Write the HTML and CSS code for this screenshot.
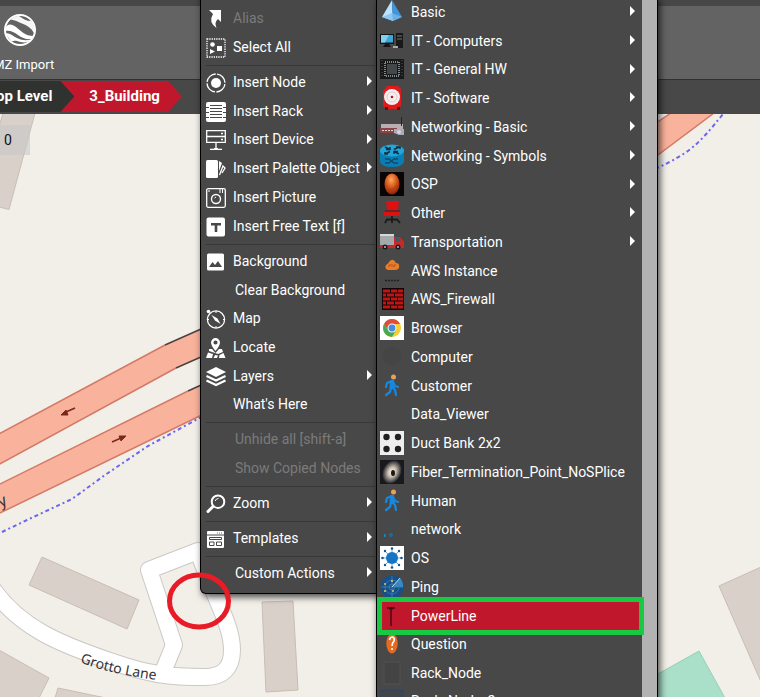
FILE: index.html
```html
<!DOCTYPE html>
<html lang="en">
<head>
<meta charset="utf-8">
<title>3_Building</title>
<link rel="stylesheet" href="styles.css">
</head>
<body>
<header class="toolbar">
  <button class="tool">
    <svg class="tool-icon" viewBox="0 0 32 32"><circle cx="16" cy="16" r="15" fill="none" stroke="#fff" stroke-width="2"/><path fill="#fff" d="M6 6C10 5 13 8 18 9.500C23 11 27 14 30 19C31 15 30 10 27 7C23 7 19 5 15 2C11 2 8 4 6 6z" opacity=".95"/><path fill="#fff" d="M1 14C4 9 8 10 12 13C17 17 21 22 30 22L28 25C23 26 18 24 14 21C10 18 6 16 1 17z"/><path fill="#fff" d="M1 19C6 19 9 22 13 24C18 27 23 26 27 26C22 30 17 28 13 27C10 26 9 28 7 27z"/></svg>
    <span>KMZ Import</span>
  </button>
</header>
<nav class="crumbs" aria-label="Location">
  <a class="crumb crumb-root" href="#">Top Level</a>
  <a class="crumb crumb-current" href="#">3_Building</a>
</nav>
<main class="map">
  <svg class="map-canvas" viewBox="0 114 760 583" preserveAspectRatio="xMinYMin slice">
    <g fill="#d9d0c9" stroke="#c9bdb6">
      <path d="M3 113H35L9 209.500L-1 207V127z"/>
      <path d="M42 557L139 600L127 629L29 585z"/>
      <path d="M-1 650L49 678L39 698H-1z"/>
      <path d="M58 688L106 698H55z"/>
      <path d="M262 602L293 601L298 690L266 692z"/>
      <path d="M761 567L719 586L761 682z"/>
    </g>
    <path fill="#aadfc9" stroke="#96d0b8" d="M640 684L699 651L725 698H640z"/>
    <g fill="none" stroke-linejoin="round">
      <path stroke="#cbc9c6" stroke-width="18" d="M-8 588C20 628 60 644 110 661C150 675 170 677 205 677Q232 677 232 650C232 625 215 600 198 551L149 570L174 645L163 672"/>
      <path stroke="#fff" stroke-width="16" d="M-8 588C20 628 60 644 110 661C150 675 170 677 205 677Q232 677 232 650C232 625 215 600 198 551L149 570L174 645L163 672"/>
    </g>
    <g fill="#f9b29c">
      <path d="M-1 434L165 345L210 325V353L176 368L-1 464.500z"/>
      <path d="M-1 484.500L188 391L210 381V411L-1 513.500z"/>
      <path d="M650 127L671 113H714L650 161z"/>
    </g>
    <g fill="none" stroke="#d27a67" stroke-width="1.500">
      <path d="M-1 434L165 345M-1 464.500L176 368M-1 484.500L188 391M-1 513.500L210 411M650 127L671 113M650 161L714 113"/>
      <path stroke="#4b423e" d="M165 345L210 325M176 368L210 353M188 391L210 381"/>
    </g>
    <g fill="#7a2a1c" stroke="#7a2a1c">
      <path d="M75 408L66 412" stroke-width="1.500"/><path d="M61 415L66 410L68 415z"/>
      <path d="M112 442L121 438" stroke-width="1.500"/><path d="M126 436L119 436L121 441z"/>
    </g>
    <g fill="none" stroke="#6a66f0" stroke-width="2" stroke-dasharray="4 3 2 3">
      <path d="M2 532L27 520L72 499L105 475L148 446L205 415"/>
      <path d="M655 169C690 153 698 145 723 114"/>
    </g>
    <path id="lane" fill="none" d="M80 662Q112 676 190 684"/>
    <text class="road-name"><textPath href="#lane">Grotto Lane</textPath></text>
    <text class="road-name road-name-large" text-anchor="end" transform="translate(8 504) rotate(-26)">Way</text>
  </svg>
  <div class="counter">0</div>
</main>

<div class="menu" role="menu">
  <div class="group">
    <button class="item" disabled><svg class="icon" viewBox="0 0 20 20"><path fill="#aaa" d="M6 4H18V10H6z"/></svg>Paste</button>
    <button class="item" disabled><svg class="icon" viewBox="0 0 20 20"><path fill="#fff" d="M3 1H15V13L12 10Q8 13 10.500 19Q2 13 7 5z"/></svg>Alias</button>
    <button class="item"><svg class="icon" viewBox="0 0 20 20"><path fill="none" stroke="#fff" stroke-width="1.300" stroke-dasharray="1.300 1" d="M1 1H19V19H1z"/><circle cx="6.500" cy="6.500" r="2.300" fill="#fff"/><path fill="#fff" d="M11 8H16V13H11zM4 11L9 13.500L4 16z"/></svg>Select All</button>
  </div>
  <div class="group">
    <button class="item has-sub"><svg class="icon" viewBox="0 0 20 20"><circle cx="10" cy="10" r="9" fill="none" stroke="#fff" stroke-width="1.300" stroke-dasharray="12.600 1.500" stroke-dashoffset="-1"/><circle cx="10" cy="10" r="5" fill="#fff"/></svg>Insert Node</button>
    <button class="item has-sub"><svg class="icon" viewBox="0 0 20 20"><rect width="20" height="20" rx="2" fill="#fff"/><path fill="none" stroke="#484848" d="M0 5.500H3M17 5.500H20M0 10.500H3M17 10.500H20M0 15.500H3M17 15.500H20M4 3.500H16M4 6.500H16M4 9.500H16M4 12.500H16M4 15.500H16"/></svg>Insert Rack</button>
    <button class="item has-sub"><svg class="icon" viewBox="0 0 20 20"><path fill="none" stroke="#fff" stroke-width="1.300" d="M.7.700H19.300V12.300H.7zM.7 6.500H19.300M10 12V18M4 19.300H16M15 3.500H17M15 9.500H17M10 18L8 19M10 18L12 19"/></svg>Insert Device</button>
    <button class="item has-sub"><svg class="icon" viewBox="0 0 20 20"><rect y="1" width="12" height="18" rx="1.500" fill="#fff"/><path fill="#fff" d="M13 2L16 4L13 12z"/><path fill="none" stroke="#fff" stroke-width="1.300" d="M13.500 16L17 7L19 9L16 14"/></svg>Insert Palette Object</button>
    <button class="item"><svg class="icon" viewBox="0 0 20 20"><rect x=".7" y=".7" width="18.600" height="18.600" rx="1.500" fill="none" stroke="#fff" stroke-width="1.300"/><circle cx="10" cy="11" r="4.500" fill="none" stroke="#fff" stroke-width="1.400"/><path stroke="#fff" d="M14 1V5M16.500 1V5M2 3H4M8.500 10L10 9"/></svg>Insert Picture</button>
    <button class="item"><svg class="icon" viewBox="0 0 20 20"><rect x=".5" y=".5" width="18.500" height="19" rx="2" fill="#fff"/><path fill="#484848" d="M5 6H15V8.500H11.300V15H8.700V8.500H5z"/></svg>Insert Free Text [f]</button>
  </div>
  <div class="group group-map">
    <button class="item"><svg class="icon" viewBox="0 0 20 20"><rect x="1" y="1.500" width="17" height="17" rx="1.500" fill="#fff"/><path fill="#484848" d="M3 15L6.500 10L9 13L12 9L16 15z"/></svg>Background</button>
    <button class="item text-only">Clear Background</button>
    <button class="item"><svg class="icon" viewBox="0 0 20 20"><circle cx="10" cy="10.500" r="8.600" fill="none" stroke="#fff" stroke-width="1.300"/><path fill="#fff" d="M5.500 6L11.500 9.500L14.500 15L9 11.500z"/><path stroke="#fff" d="M10 2V4M10 17V19M1 10.500H3M17 10.500H19"/><circle cx="2.500" cy="2.500" r="1.800" fill="#fff"/></svg>Map</button>
    <button class="item"><svg class="icon" viewBox="0 0 20 20"><path fill="#fff" fill-rule="evenodd" d="M9.500 0A4.600 4.600 0 0 1 14 4.600C14 8 9.500 13 9.500 13S5 8 5 4.600A4.600 4.600 0 0 1 9.500 0zM9.500 2.500A2 2 0 1 0 9.500 6.600A2 2 0 1 0 9.500 2.500z"/><path fill="#fff" d="M3 11H6L9.500 15L13 11H16L17 14L12 16L3 13zM2 14.500L7 16L6 20H0zM9 17L12 17.500L11 20H7.500zM13.500 17L17.500 15L19.500 20H13z"/></svg>Locate</button>
    <button class="item has-sub"><svg class="icon" viewBox="0 0 20 20"><path fill="#fff" d="M10 0L20 5L10 10L0 5z"/><path fill="none" stroke="#fff" stroke-width="2.200" d="M.5 9L10 13.500L19.500 9M.5 13.500L10 18L19.500 13.500"/></svg>Layers</button>
    <button class="item"><span class="icon"></span>What's Here</button>
  </div>
  <div class="group">
    <button class="item text-only" disabled>Unhide all [shift-a]</button>
    <button class="item text-only" disabled>Show Copied Nodes</button>
  </div>
  <div class="group">
    <button class="item has-sub"><svg class="icon" viewBox="0 0 20 20"><circle cx="12" cy="7.700" r="6.300" fill="none" stroke="#fff" stroke-width="2"/><path stroke="#fff" stroke-width="3" stroke-linecap="round" d="M6.500 13L2 17.500"/><path fill="none" stroke="#fff" d="M9 7Q10 4.500 12.500 4.500"/></svg>Zoom</button>
  </div>
  <div class="group">
    <button class="item has-sub"><svg class="icon" viewBox="0 0 20 20"><rect x="1" y="2" width="17" height="17" rx="1" fill="#fff"/><path fill="none" stroke="#484848" d="M1 6H18M3.500 8.500H15.500V10.500H3.500zM3.500 13H8V16.500H3.500zM10.500 13H15.500V16.500H10.500z"/><path stroke="#777" d="M11 4H12M13 4H14M15 4H16"/></svg>Templates</button>
  </div>
  <div class="group">
    <button class="item text-only has-sub">Custom Actions</button>
  </div>
</div>

<div class="menu submenu" role="menu">
  <div class="entries">
    <button class="item has-sub"><svg class="icon" viewBox="0 0 24 24"><path fill="#b8e2ff" d="M12 0L2 17L13 21z"/><path fill="#3f96dd" d="M12 0L22 17L13 21z"/><path fill="#7dbcf0" d="M2 17L12 13L22 17L13 21z" opacity=".7"/></svg>Basic</button>
    <button class="item has-sub"><svg class="icon" viewBox="0 0 24 24"><path fill="#151515" d="M0 5H14V15H0zM5 15H9L11 18H3z"/><path fill="#39a7d8" d="M1 6H13V13.500H1z"/><path fill="#83d0ee" d="M1 6H9L5 13.500H1z"/><path fill="#191919" d="M16 4H23V19H16z"/><path stroke="#777" d="M17 7H22M17 10H22"/><path fill="#aaa" d="M13 17H18V19H13z"/></svg>IT - Computers</button>
    <button class="item has-sub"><svg class="icon" viewBox="0 0 24 24"><rect y="2" width="24" height="20" fill="#17191b"/><rect x="7" y="7" width="10" height="10" fill="#42474a"/><path fill="none" stroke="#81888c" stroke-width="2" stroke-dasharray="1 1" d="M5 5H19V19H5z"/><path stroke="#555" stroke-dasharray="1 2" d="M2 3V21M22 3V21"/></svg>IT - General HW</button>
    <button class="item has-sub"><svg class="icon" viewBox="0 0 24 24"><path fill="#e0191a" d="M7 0H18L21 3V20L18 23H6L3 20V5z"/><circle cx="12" cy="11" r="8" fill="#f5eeee"/><circle cx="12" cy="11" r="5" fill="none" stroke="#dcc"/><circle cx="12" cy="11" r="1.300" fill="#b41b1b"/><path fill="#7e0507" d="M5 21H8V24H5zM17 21H20V24H17z"/></svg>IT - Software</button>
    <button class="item has-sub"><svg class="icon" viewBox="0 0 24 24"><path fill="#b9afb2" d="M1 9H23V14H1z"/><path fill="#8c4249" d="M0 13H17V18H0z"/><path stroke="#ddc" stroke-dasharray="2 1" d="M2 15.500H13"/><path stroke="#252525" d="M21.500 2V11"/><path fill="#a7adb5" d="M14 14H24V20H19L14 18z"/><circle cx="19" cy="17" r="2" fill="#dce"/></svg>Networking - Basic</button>
    <button class="item has-sub"><svg class="icon" viewBox="0 0 24 24"><path fill="#087eb4" d="M0 6H24V18Q22 23 12 23T0 18z"/><ellipse cx="12" cy="6.500" rx="12" ry="6" fill="#21a5dc"/><path fill="none" stroke="#13303d" stroke-width="1.500" d="M5 3L10 5.500M10 3V5.500H6M19 3L14 5.500M20 5V3H16M5 10L10 7.500M5 8V10H8M19 10L14 7.500M14 10V7.500H18"/><path fill="none" stroke="#124c69" stroke-width="1.300" d="M5 15H9L14 19H18M5 19H9L14 15H18"/></svg>Networking - Symbols</button>
    <button class="item has-sub"><svg class="icon" viewBox="0 0 24 24"><defs><radialGradient id="ember" cx=".45" cy=".3" r=".7"><stop offset="0" stop-color="#f9ab5c"/><stop offset=".5" stop-color="#d9581b"/><stop offset="1" stop-color="#8a210b"/></radialGradient></defs><path fill="#080504" d="M0 0H24V24H0z"/><ellipse cx="12" cy="12" rx="7.500" ry="10.500" fill="url(#ember)"/><path fill="none" stroke="#a33a12" stroke-width=".7" d="M8 17Q13 19 17 13"/></svg>OSP</button>
    <button class="item has-sub"><svg class="icon" viewBox="0 0 24 24"><path fill="#df1010" d="M6 0H19L18 9H7zM4 11H20V15H4z"/><path stroke="#7b0808" d="M5 10H20"/><path fill="none" stroke="#1b1b1b" stroke-width="1.800" d="M12 15V22M5 22L7 18.500H17L20 22"/></svg>Other</button>
    <button class="item has-sub"><svg class="icon" viewBox="0 0 24 24"><path fill="#a4a9ac" d="M0 4H14V15H0z"/><path fill="#d6d9da" d="M0 4H14V6H0z"/><path fill="#cc272b" d="M14 7H20L24 12V18H0V15H14z"/><path fill="#3e5867" d="M16 8H19L21 12H16z"/><circle cx="5" cy="17" r="2.500" fill="#191919"/><circle cx="18" cy="17" r="2.500" fill="#191919"/><circle cx="5" cy="17" r="1" fill="#bbb"/><circle cx="18" cy="17" r="1" fill="#bbb"/></svg>Transportation</button>
    <button class="item"><svg class="icon" viewBox="0 0 24 24"><path fill="#e97b2a" d="M8 11Q4 10 6 6Q8 5 9 3Q13-2 16 4Q20 4 19 9Q18 11 15 11z"/><path fill="none" stroke="#a64d14" stroke-width=".8" d="M8 7H10V5M12 5V8M14 8V6H16"/><path stroke="#202020" stroke-width="1.500" stroke-dasharray="2 1" d="M5 21.500H19"/></svg>AWS Instance</button>
    <button class="item"><svg class="icon" viewBox="0 0 24 24"><path fill="#140606" d="M2 1H24V23H2z"/><path stroke="#c01515" stroke-width="3" d="M3 4H10M11 4H17M18 4H23M3 8H6M7 8H14M15 8H23M3 12H10M11 12H17M18 12H23M3 16H6M7 16H14M15 16H23M3 20H10M11 20H17M18 20H23"/></svg>AWS_Firewall</button>
    <button class="item"><svg class="icon" viewBox="0 0 24 24"><path fill="#fff" d="M0 0H24V24H0z"/><circle cx="12" cy="12" r="9" fill="#f6ce32"/><path fill="#df4b3d" d="M4 8A9 9 0 0 1 20 8H12L8 14z"/><path fill="#48a853" d="M4 8A9 9 0 0 0 12 21L16 14H8z"/><circle cx="12" cy="12" r="4.500" fill="#eef"/><circle cx="12" cy="12" r="3.400" fill="#458bdf"/></svg>Browser</button>
    <button class="item"><svg class="icon" viewBox="0 0 24 24"><rect x="3" y="2" width="18" height="18" rx="8" fill="#454545"/></svg>Computer</button>
    <button class="item"><svg class="icon" viewBox="0 0 24 24"><use href="#walker"/></svg>Customer</button>
    <button class="item"><span class="icon"></span>Data_Viewer</button>
    <button class="item"><svg class="icon" viewBox="0 0 24 24"><path fill="#eee" d="M0 0H24V24H0z"/><g fill="#202020"><circle cx="6.500" cy="6" r="3.200"/><circle cx="18" cy="6" r="3.200"/><circle cx="6.500" cy="18" r="3.200"/><circle cx="18" cy="18" r="3.200"/></g></svg>Duct Bank 2x2</button>
    <button class="item"><svg class="icon" viewBox="0 0 24 24"><defs><radialGradient id="glow"><stop offset="0" stop-color="#fff8e6"/><stop offset=".4" stop-color="#cfc2b2"/><stop offset="1" stop-color="#23242a"/></radialGradient></defs><path fill="#18191d" d="M0 0H24V24H0z"/><ellipse cx="12" cy="12" rx="9" ry="12" fill="url(#glow)" transform="rotate(25 12 12)"/><ellipse cx="13" cy="13" rx="2" ry="3" fill="#1c1717"/></svg>Fiber_Termination_Point_NoSPlice</button>
    <button class="item"><svg class="icon" viewBox="0 0 24 24"><g id="walker"><circle cx="13.500" cy="3" r="2.500" fill="#e9a154"/><path fill="none" stroke="#1688de" stroke-linecap="round" stroke-linejoin="round" stroke-width="2.200" d="M12 7L7 9L6 13M13 8L15 12L18 13M11 14L10 18L6 21M12 13L15 16L16 21"/><path fill="#1688de" d="M10 6H14L15 15H9.500z"/></g></svg>Human</button>
    <button class="item"><svg class="icon" viewBox="0 0 24 24"><path fill="none" stroke="#225b79" stroke-dasharray="1 2" d="M5 9Q14 2 19 5M7 12L18 9"/><path fill="#2185bd" d="M4 17H5.500V20H4z"/><circle cx="11" cy="18" r="2" fill="#1c6c9b"/></svg>network</button>
    <button class="item"><svg class="icon" viewBox="0 0 24 24"><path fill="#fff" d="M0 0H24V24H0z"/><path stroke="#76aedd" d="M12 2V22M2 12H22M5 5L19 19M19 5L5 19"/><circle cx="12" cy="12" r="6" fill="#1475c4"/><g fill="#16558d"><circle cx="12" cy="2.500" r="1.300"/><circle cx="12" cy="21.500" r="1.300"/><circle cx="2.500" cy="12" r="1.300"/><circle cx="21.500" cy="12" r="1.300"/><circle cx="5" cy="5" r="1.200"/><circle cx="19" cy="5" r="1.200"/><circle cx="5" cy="19" r="1.200"/><circle cx="19" cy="19" r="1.200"/></g></svg>OS</button>
    <button class="item"><svg class="icon" viewBox="0 0 24 24"><circle cx="12" cy="12" r="11.500" fill="#174f89"/><path fill="#358bc8" d="M12 12L20 3A12 12 0 0 1 23 12z"/><g fill="none" stroke="#437fb1" stroke-width=".8"><circle cx="12" cy="12" r="7"/><circle cx="12" cy="12" r="3"/><path d="M1 12H23M12 1V23"/></g><path stroke="#b8d9ef" d="M12 12L20 3"/><g fill="#e5d55c"><circle cx="12" cy="6" r="1"/><circle cx="5" cy="9" r=".9"/><circle cx="5" cy="16" r="1"/><circle cx="13" cy="16" r=".9"/></g></svg>Ping</button>
    <button class="item active"><svg class="icon" viewBox="0 0 24 24"><path fill="none" stroke="#4d0910" stroke-width="1.500" d="M7 4H15M11 3V22M9 5L11 4L13 5"/></svg>PowerLine</button>
    <button class="item"><svg class="icon" viewBox="0 0 24 24"><ellipse cx="12" cy="11.500" rx="5.700" ry="10" fill="#e46a22"/><path fill="none" stroke="#fff" stroke-width="1.700" d="M9.500 8Q10 5 12.500 5Q15 6 14 9Q12 11 12 14"/><circle cx="12" cy="17" r="1" fill="#fff"/></svg>Question</button>
    <button class="item"><svg class="icon" viewBox="0 0 24 24"><path fill="#444" stroke="#505050" d="M4 1H20V23H4z"/></svg>Rack_Node</button>
    <button class="item"><svg class="icon" viewBox="0 0 24 24"><path fill="#414449" stroke="#29466d" d="M1 1H23V23H1z"/></svg>Rack_Node_2</button>
  </div>
  <div class="track"></div>
</div>
<svg class="marker" viewBox="0 0 64 58"><ellipse cx="32" cy="29" rx="29.500" ry="26" fill="none" stroke="#e81c27" stroke-width="5"/></svg>
</body>
</html>
```
FILE: styles.css
```css
* { box-sizing: border-box; }

body {
  position: relative;
  display: flex;
  flex-direction: column;
  height: 100vh;
  margin: 0;
  overflow: hidden;
  background: #f2efe9;
  font: 14px/20px Roboto, "Liberation Sans", sans-serif;
}

button {
  border: 0;
  margin: 0;
  background: none;
  color: inherit;
  font: inherit;
  text-align: left;
}

.toolbar {
  display: flex;
  padding-bottom: 4px;
  border-top: 6px solid #474747;
  border-bottom: 1px solid #303030;
  background: #636363;
}

.tool {
  display: flex;
  flex-direction: column;
  align-items: center;
  gap: 9px;
  margin-left: -15px;
  padding: 8px 0 0;
  color: #fff;
  font-size: 13px;
  white-space: nowrap;
}

.tool-icon { width: 32px; height: 32px; }

.crumbs {
  display: flex;
  height: 34px;
  padding: 1px 0 2px;
  background: #484848;
}

.crumb {
  color: #fff;
  font-size: 15px;
  font-weight: 700;
  line-height: 30px;
  text-decoration: none;
  white-space: nowrap;
}

.crumb-root {
  margin-left: -12px;
  padding: 0 22px 0 0;
  background: #2f322f;
}

.crumb-current {
  margin-left: -14px;
  padding: 0 22px 0 29px;
  background: #c1172c;
  clip-path: polygon(0 0, calc(100% - 14px) 0, 100% 50%, calc(100% - 14px) 100%, 0 100%, 14px 50%);
}

.map {
  position: relative;
  flex: 1;
  min-height: 0;
}

.map-canvas { display: block; width: 100%; height: 100%; }

.road-name { fill: #333; font: 14px "Noto Sans", sans-serif; }
.road-name-large { font-size: 16px; }

.counter {
  position: absolute;
  top: 11px;
  left: 0;
  width: 30px;
  padding: 5px 4px;
  background: rgba(200, 200, 200, .6);
  color: #111;
}

.menu {
  position: absolute;
  top: -26px;
  left: 200px;
  width: 190px;
  padding-bottom: 6px;
  border: 1px solid #000;
  border-top: 0;
  border-radius: 0 0 6px 6px;
  background: #484848;
  box-shadow: 2px 3px 7px rgba(0, 0, 0, .7);
  color: #fff;
}

.group + .group::before {
  content: "";
  display: block;
  height: 6px;
  margin: 0 14px 0 5px;
  background: linear-gradient(#383838, #383838) 0 4px / 100% 1px no-repeat;
}

.item {
  position: relative;
  display: flex;
  align-items: center;
  gap: 7px;
  width: 100%;
  height: 29px;
  padding: 0 5px;
  white-space: nowrap;
}

.group .item:nth-child(3) { height: 28px; }
.group-map .item:last-child { height: 28px; }
.group:first-child .item { height: 29px; }

.item:disabled { color: #7b7b7b; }
.text-only { padding-left: 34px; }

.icon { flex: none; width: 20px; height: 20px; }
.group .icon { margin-top: 2px; }

.has-sub::after {
  content: "";
  position: absolute;
  top: 9px;
  left: 166px;
  border: 5px solid transparent;
  border-right: 0;
  border-left-color: #fff;
}

.submenu {
  top: -3px;
  left: 376px;
  display: flex;
  width: 282px;
  padding: 0;
  border-radius: 0;
}

.entries { flex: 1; }
.submenu .item { padding: 0 3px; }
.submenu .item:nth-child(4n + 3) { height: 28px; }
.submenu .item:last-child { height: 27px; }
.submenu .icon { width: 24px; height: 24px; }

.submenu .has-sub::after { right: 7px; left: auto; }

.track { width: 15px; background: #b2b2b2; }

.submenu .active {
  background: #c1172c;
}

.active::before {
  content: "";
  position: absolute;
  z-index: 1;
  inset: -4px -2px -5px 0;
  border: 5px solid #17c943;
}

.marker {
  position: absolute;
  top: 572px;
  left: 167px;
  width: 64px;
  height: 58px;
}
```
